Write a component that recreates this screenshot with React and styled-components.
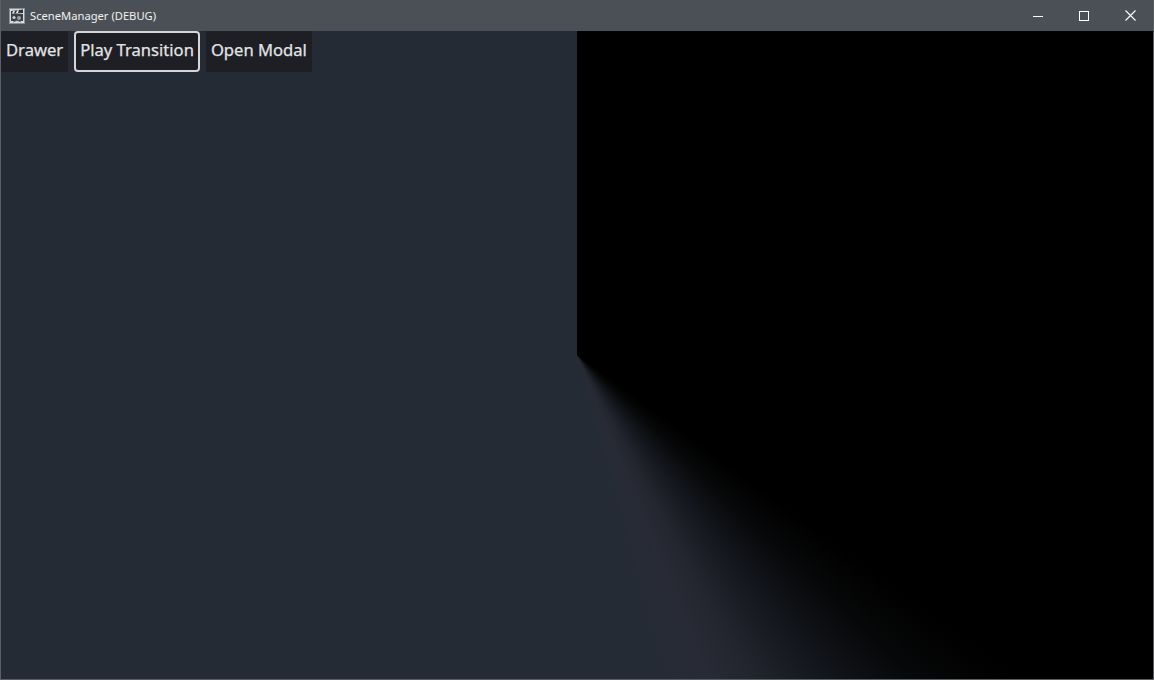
import React from "react";
import styled, { createGlobalStyle } from "styled-components";

const GlobalStyle = createGlobalStyle`
  html, body {
    margin: 0;
    padding: 0;
    background: #25292f;
  }
  #root {
    height: 680px;
  }
`;

const Window = styled.div`
  display: flex;
  flex-direction: column;
  width: 1154px;
  height: 680px;
  box-sizing: border-box;
  border: 1px solid #5a5f64;
  border-top: none;
  background: #4b5056;
  overflow: hidden;
`;

const TitleBar = styled.div`
  display: flex;
  align-items: center;
  height: 31px;
  flex: none;
  background: #4b5056;
  font-family: "Noto Sans", "Open Sans", sans-serif;
  font-size: 11.2px;
  color: #f2f2f2;
`;

const AppIcon = styled.div`
  width: 16px;
  height: 16px;
  margin: 0 5px 0 8px;
  display: flex;
`;

const Title = styled.span`
  flex: 1;
`;

const CaptionButton = styled.div`
  width: 46px;
  height: 30px;
  display: flex;
  align-items: center;
  justify-content: center;
`;

const Viewport = styled.div`
  flex: 1;
  background: conic-gradient(
    from 0deg at 576px 324px,
    #000 0deg 126deg,
    #070809 134deg,
    #14171d 143deg,
    #23262f 152deg,
    #282a35 158deg,
    #252b35 165deg 360deg
  );
`;

const Toolbar = styled.div`
  display: flex;
  gap: 6px;
  height: 41px;
`;

const Button = styled.button`
  height: 41px;
  padding: 0 ${(p) => (p.$focused ? "4px" : "3px")} 2px;
  box-sizing: border-box;
  border: 2px solid ${(p) => (p.$focused ? "#d6d6d6" : "transparent")};
  border-radius: ${(p) => (p.$focused ? "4px" : "2px")};
  background: #1d1f25;
  color: #e4e4e4;
  font-family: "Noto Sans", "Open Sans", sans-serif;
  font-size: 16.6px;
  line-height: 1;
  -webkit-text-stroke: 0.25px #e4e4e4;
`;

function Logo() {
  return (
    <svg width="16" height="16" viewBox="0 0 16 16">
      <rect x="0.5" y="0.5" width="15" height="15" fill="#d9dde2" stroke="#8b9096" />
      <rect x="2" y="6" width="12" height="7" fill="#3a3f47" />
      <path d="M2 3 L14 1.5 L14 5 L2 6 Z" fill="#2f333a" />
      <path d="M4 3 L6 2.7 L5 5.5 L3 5.7 Z M8 2.4 L10 2.2 L9 5.1 L7 5.3 Z" fill="#e6e6e6" />
      <circle cx="5" cy="9.5" r="1.6" fill="#c9ced4" />
      <circle cx="10" cy="10" r="2" fill="#9aa0a8" />
      <path d="M4 14 Q8 11 12 14" stroke="#6f757d" fill="none" />
    </svg>
  );
}

function App() {
  return (
    <>
      <GlobalStyle />
      <Window>
        <TitleBar>
          <AppIcon>
            <Logo />
          </AppIcon>
          <Title>SceneManager (DEBUG)</Title>
          <CaptionButton>
            <svg width="10" height="10" viewBox="0 0 10 10">
              <path d="M0 5.5 H10" stroke="#ffffff" strokeWidth="1" />
            </svg>
          </CaptionButton>
          <CaptionButton>
            <svg width="10" height="10" viewBox="0 0 10 10">
              <rect x="0.5" y="0.5" width="9" height="9" fill="none" stroke="#ffffff" strokeWidth="1" />
            </svg>
          </CaptionButton>
          <CaptionButton>
            <svg width="11" height="11" viewBox="0 0 11 11">
              <path d="M0.5 0.5 L10.5 10.5 M10.5 0.5 L0.5 10.5" stroke="#ffffff" strokeWidth="1.1" />
            </svg>
          </CaptionButton>
        </TitleBar>
        <Viewport>
          <Toolbar>
            <Button>Drawer</Button>
            <Button $focused>Play Transition</Button>
            <Button>Open Modal</Button>
          </Toolbar>
        </Viewport>
      </Window>
    </>
  );
}

export default App;
